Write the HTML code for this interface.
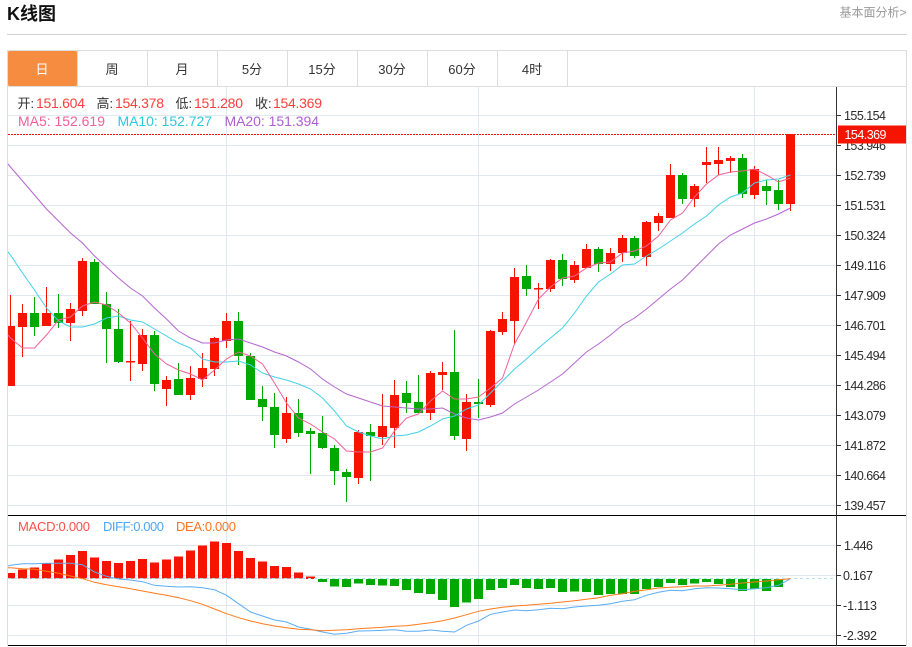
<!DOCTYPE html>
<html lang="zh">
<head>
<meta charset="utf-8">
<title>K线图</title>
<style>
html,body{margin:0;padding:0;background:#fff;}
body{width:912px;height:647px;overflow:hidden;position:relative;}
svg{position:absolute;left:0;top:0;font-family:"Liberation Sans","Noto Sans CJK SC",sans-serif;}
</style>
</head>
<body>
<svg width="912" height="647" viewBox="0 0 912 647" xmlns="http://www.w3.org/2000/svg">
<rect width="912" height="647" fill="#fff"/>
<!-- header -->
<text x="7" y="20" font-size="18" font-weight="bold" fill="#111">K线图</text>
<text x="839.5" y="16.5" font-size="12" fill="#999">基本面分析&gt;</text>
<rect x="7" y="34" width="900" height="1" fill="#d0d0d0"/>
<!-- tabs -->
<rect x="7" y="50" width="900" height="1" fill="#ddd"/>
<rect x="7" y="86" width="900" height="1" fill="#ddd"/>
<rect x="7" y="50" width="1" height="596" fill="#ddd"/>
<rect x="906" y="50" width="1" height="596" fill="#ddd"/>
<path d="M77 51h1v35h-1zM147 51h1v35h-1zM217 51h1v35h-1zM287 51h1v35h-1zM357 51h1v35h-1zM427 51h1v35h-1zM497 51h1v35h-1zM567 51h1v35h-1z" fill="#ddd"/>
<rect x="8" y="51" width="69" height="35" rx="1.5" fill="#f58c40"/>
<g font-size="13" fill="#333" text-anchor="middle">
<text x="42" y="74" fill="#fff">日</text>
<text x="112" y="74">周</text>
<text x="182" y="74">月</text>
<text x="252" y="74">5分</text>
<text x="322" y="74">15分</text>
<text x="392" y="74">30分</text>
<text x="462" y="74">60分</text>
<text x="532" y="74">4时</text>
</g>
<!-- grid -->
<path d="M8 115.5H836M8 145.5H836M8 175.5H836M8 205.5H836M8 235.5H836M8 265.5H836M8 295.5H836M8 325.5H836M8 355.5H836M8 385.5H836M8 415.5H836M8 445.5H836M8 475.5H836M8 505.5H836M8 545.5H836M8 575.5H836M8 605.5H836M8 635.5H836M226.5 87V645M478.5 87V645M754.5 87V645" stroke="#e1e8ef" stroke-width="1" fill="none"/>
<!-- red candles -->
<path fill="#f41400" d="M10 295h1v91h-1zM8 326h7v60h-7z
M22 304h1v53h-1zM18 313h9v14h-9z
M46 287h1v39h-1zM42 313h9v13h-9z
M70 303h1v38h-1zM66 309h9v14h-9z
M82 258h1v58h-1zM78 261h9v50h-9z
M130 321h1v60h-1zM126 361h9v1.5h-9z
M142 329h1v42h-1zM138 335h9v29h-9z
M166 376h1v30h-1zM162 380h9v9h-9z
M190 366h1v34h-1zM186 378h9v17h-9z
M202 353h1v34h-1zM198 368h9v11h-9z
M214 337h1v39h-1zM210 338h9v31h-9z
M226 313h1v35h-1zM222 321h9v20h-9z
M286 397h1v46h-1zM282 413h9v26h-9z
M358 430h1v54h-1zM354 432h9v46h-9z
M382 394h1v51h-1zM378 426h9v11h-9z
M394 380h1v68h-1zM390 395h9v33h-9z
M430 371h1v49h-1zM426 373h9v40h-9z
M442 362h1v28h-1zM438 372h9v3h-9z
M466 394h1v57h-1zM462 402h9v37h-9z
M490 330h1v77h-1zM486 331h9v74h-9z
M502 312h1v23h-1zM498 319h9v13h-9z
M514 268h1v76h-1zM510 277h9v44h-9z
M538 283h1v26h-1zM534 288h9v1.5h-9z
M550 259h1v33h-1zM546 260h9v29h-9z
M574 261h1v22h-1zM570 265h9v15h-9z
M586 244h1v24h-1zM582 249h9v19h-9z
M610 248h1v23h-1zM606 253h9v11h-9z
M622 235h1v27h-1zM618 238h9v15h-9z
M646 221h1v45h-1zM642 222h9v35h-9z
M658 213h1v18h-1zM654 216h9v7h-9z
M670 164h1v54h-1zM666 175h9v43h-9z
M694 184h1v23h-1zM690 186h9v13h-9z
M706 147h1v36h-1zM702 162h9v3h-9z
M718 147h1v28h-1zM714 160h9v4h-9z
M730 156h1v17h-1zM726 158h9v3h-9z
M754 166h1v33h-1zM750 169h9v26h-9z
M790 134h1v77h-1zM786 134h9v70h-9z"/>
<!-- green candles -->
<path fill="#00a800" d="M34 297h1v39h-1zM30 313h9v14h-9z
M58 294h1v34h-1zM54 313h9v10h-9z
M94 259h1v45h-1zM90 262h9v42h-9z
M106 292h1v71h-1zM102 304h9v25h-9z
M118 309h1v54h-1zM114 329h9v33h-9z
M154 331h1v60h-1zM150 335h9v49h-9z
M178 363h1v32h-1zM174 379h9v16h-9z
M238 312h1v53h-1zM234 321h9v35h-9z
M250 353h1v47h-1zM246 356h9v44h-9z
M262 386h1v35h-1zM258 399h9v8h-9z
M274 393h1v55h-1zM270 407h9v28h-9z
M298 399h1v38h-1zM294 413h9v20h-9z
M310 428h1v46h-1zM306 431h9v3h-9z
M322 416h1v33h-1zM318 433h9v15h-9z
M334 445h1v40h-1zM330 448h9v23h-9z
M346 469h1v33h-1zM342 472h9v5h-9z
M370 424h1v57h-1zM366 432h9v4h-9z
M406 381h1v32h-1zM402 393h9v10h-9z
M418 375h1v38h-1zM414 402h9v11h-9z
M454 330h1v110h-1zM450 372h9v64h-9z
M478 379h1v39h-1zM474 402h9v2h-9z
M526 265h1v31h-1zM522 276h9v13h-9z
M562 254h1v32h-1zM558 260h9v19h-9z
M598 247h1v25h-1zM594 249h9v15h-9z
M634 236h1v22h-1zM630 238h9v18h-9z
M682 173h1v31h-1zM678 175h9v24h-9z
M742 154h1v44h-1zM738 158h9v36h-9z
M766 180h1v25h-1zM762 186h9v5h-9z
M778 180h1v30h-1zM774 190h9v14h-9z"/>
<!-- MA lines -->
<polyline fill="none" stroke="#b565d0" stroke-width="1" points="8,164 10.5,167 22.5,181 34.5,195 46.5,209 58.5,221 70.5,233 82.5,243 94.5,256 106.5,267 118.5,278 130.5,288 142.5,296 154.5,308 166.5,319 178.5,331 190.5,338 202.5,343 214.5,343 226.5,340 238.5,339 250.5,343 262.5,347 274.5,352 286.5,356 298.5,362 310.5,369 322.5,379 334.5,387 346.5,394 358.5,398 370.5,402 382.5,406 394.5,407 406.5,408 418.5,409 430.5,409 442.5,408 454.5,414 466.5,418 478.5,420 490.5,417 502.5,413 514.5,404 526.5,397 538.5,390 550.5,382 562.5,374 574.5,363 586.5,352 598.5,344 610.5,335 622.5,325 634.5,318 646.5,309 658.5,299 670.5,289 682.5,280 694.5,268 706.5,256 718.5,244 730.5,235 742.5,229 754.5,223 766.5,219 778.5,214 790.5,208"/>
<polyline fill="none" stroke="#44d0e8" stroke-width="1" points="8,252 10.5,255 22.5,273 34.5,290 46.5,308 58.5,321 70.5,327 82.5,327 94.5,324 106.5,318 118.5,316 130.5,320 142.5,322 154.5,329 166.5,336 178.5,343 190.5,348 202.5,359 214.5,362 226.5,362 238.5,361 250.5,365 262.5,373 274.5,377 286.5,380 298.5,384 310.5,389 322.5,398 334.5,411 346.5,426 358.5,432 370.5,436 382.5,439 394.5,436 406.5,435 418.5,432 430.5,426 442.5,419 454.5,416 466.5,409 478.5,405 490.5,393 502.5,381 514.5,369 526.5,359 538.5,348 550.5,338 562.5,328 574.5,313 586.5,296 598.5,282 610.5,274 622.5,265 634.5,264 646.5,256 658.5,249 670.5,241 682.5,233 694.5,224 706.5,216 718.5,205 730.5,197 742.5,193 754.5,183 766.5,180 778.5,179 790.5,175"/>
<polyline fill="none" stroke="#f0609a" stroke-width="1" points="8,335 10.5,338 22.5,348 34.5,348 46.5,335 58.5,320 70.5,317 82.5,306 94.5,302 106.5,305 118.5,313 130.5,323 142.5,338 154.5,354 166.5,364 178.5,370 190.5,374 202.5,380 214.5,370 226.5,359 238.5,352 250.5,356 262.5,364 274.5,383 286.5,403 298.5,418 310.5,424 322.5,432 334.5,439 346.5,451 358.5,452 370.5,452 382.5,448 394.5,431 406.5,418 418.5,414 430.5,401 442.5,391 454.5,399 466.5,399 478.5,397 490.5,388 502.5,378 514.5,344 526.5,322 538.5,299 550.5,287 562.5,278 574.5,276 586.5,268 598.5,263 610.5,262 622.5,253 634.5,251 646.5,246 658.5,236 670.5,220 682.5,213 694.5,197 706.5,184 718.5,175 730.5,172 742.5,171 754.5,169 766.5,175 778.5,182 790.5,178"/>
<!-- MACD bars -->
<path fill="#f41400" d="M8 573h7v5.5h-7zM18 569.5h9v9h-9zM30 567.5h9v11h-9zM42 563h9v15.5h-9zM54 559.5h9v19h-9zM66 555h9v23.5h-9zM78 551h9v27.5h-9zM90 557.5h9v21h-9zM102 561h9v17.5h-9zM114 563h9v15.5h-9zM126 561h9v17.5h-9zM138 559h9v19.5h-9zM150 562.5h9v16h-9zM162 559.5h9v19h-9zM174 556.5h9v22h-9zM186 550.5h9v28h-9zM198 545.5h9v33h-9zM210 541.5h9v37h-9zM222 543h9v35.5h-9zM234 551h9v27.5h-9zM246 558h9v20.5h-9zM258 561.5h9v17h-9zM270 566h9v12.5h-9zM282 567h9v11.5h-9zM294 572.5h9v6h-9zM306 576.5h9v2.5h-9z"/>
<path fill="#00a800" d="M318 579h9v3h-9zM330 579h9v7.5h-9zM342 579h9v8h-9zM354 579h9v4.5h-9zM366 579h9v6h-9zM378 579h9v6.5h-9zM390 579h9v7h-9zM402 579h9v11h-9zM414 579h9v14h-9zM426 579h9v15h-9zM438 579h9v21h-9zM450 579h9v28h-9zM462 579h9v23.5h-9zM474 579h9v20h-9zM486 579h9v11h-9zM498 579h9v9h-9zM510 579h9v6h-9zM522 579h9v9h-9zM534 579h9v10h-9zM546 579h9v9h-9zM558 579h9v13h-9zM570 579h9v12.5h-9zM582 579h9v13h-9zM594 579h9v16h-9zM606 579h9v15h-9zM618 579h9v15h-9zM630 579h9v15h-9zM642 579h9v10h-9zM654 579h9v8h-9zM666 579h9v4h-9zM678 579h9v6h-9zM690 579h9v4.5h-9zM702 579h9v3h-9zM714 579h9v5h-9zM726 579h9v8h-9zM738 579h9v12h-9zM750 579h9v10h-9zM762 579h9v12h-9zM774 579h9v8h-9z"/>
<line x1="8" y1="578.5" x2="834" y2="578.5" stroke="#b4e2f2" stroke-width="1" stroke-dasharray="3 3"/>
<polyline fill="none" stroke="#59adf5" stroke-width="1" points="8,566 10.5,565.3 22.5,563.7 34.5,563.7 46.5,563.3 58.5,563.3 70.5,563.3 82.5,564.7 94.5,572 106.5,576.3 118.5,579 130.5,580 142.5,581.7 154.5,585.3 166.5,586.3 178.5,587 190.5,586.7 202.5,587.7 214.5,589.7 226.5,595.3 238.5,603.7 250.5,612 262.5,616 274.5,620 286.5,622 298.5,627 310.5,629.3 322.5,632 334.5,634.3 346.5,633.3 358.5,631 370.5,630.7 382.5,630.3 394.5,629.7 406.5,631.3 418.5,631.3 430.5,630 442.5,631.3 454.5,632 466.5,625.3 478.5,621 490.5,614.3 502.5,612 514.5,610 526.5,610.7 538.5,609.7 550.5,608.3 562.5,608.7 574.5,607 586.5,606 598.5,605.3 610.5,603.7 622.5,601.3 634.5,599.7 646.5,595.3 658.5,592.3 670.5,590.3 682.5,590.7 694.5,588.7 706.5,587.7 718.5,588 730.5,588.7 742.5,589.7 754.5,588.7 766.5,587.7 778.5,585.3 790.5,578.7"/>
<polyline fill="none" stroke="#ff7a1a" stroke-width="1" points="8,567.7 10.5,567.7 22.5,568.7 34.5,569.3 46.5,571.3 58.5,573.3 70.5,576 82.5,578.7 94.5,582.3 106.5,584.7 118.5,586.7 130.5,588.7 142.5,591 154.5,593.3 166.5,595.3 178.5,597.7 190.5,600.7 202.5,604.3 214.5,609 226.5,613.7 238.5,617.7 250.5,621 262.5,623.7 274.5,626 286.5,627.7 298.5,629.3 310.5,629.7 322.5,630.7 334.5,630.3 346.5,629.7 358.5,628.7 370.5,628 382.5,627.3 394.5,626.3 406.5,625.7 418.5,624.3 430.5,622.7 442.5,620.7 454.5,618 466.5,614.7 478.5,611.3 490.5,609 502.5,607.3 514.5,606 526.5,605.3 538.5,604.3 550.5,603.3 562.5,602 574.5,600.7 586.5,599.3 598.5,597.7 610.5,595.3 622.5,593.7 634.5,591.3 646.5,589.7 658.5,588 670.5,587.3 682.5,586.7 694.5,586 706.5,586 718.5,585.3 730.5,584.3 742.5,583 754.5,582 766.5,581 778.5,579.7 790.5,578.7"/>
<!-- current price line -->
<line x1="8" y1="134.5" x2="836" y2="134.5" stroke="#f41400" stroke-width="1" stroke-dasharray="2 1"/>
<!-- separators -->
<rect x="8" y="515" width="898" height="1" fill="#000"/>
<rect x="8" y="645" width="898" height="1" fill="#000"/>
<!-- axis -->
<rect x="836" y="87" width="1" height="559" fill="#333"/>
<path d="M837 115.5h4M837 145.5h4M837 175.5h4M837 205.5h4M837 235.5h4M837 265.5h4M837 295.5h4M837 325.5h4M837 355.5h4M837 385.5h4M837 415.5h4M837 445.5h4M837 475.5h4M837 505.5h4M837 545.5h4M837 575.5h4M837 605.5h4M837 635.5h4" stroke="#333" stroke-width="1"/>
<g font-size="12.5" fill="#2a2a2a">
<text x="844" y="120" textLength="42">155.154</text>
<text x="844" y="150" textLength="42">153.946</text>
<text x="844" y="180" textLength="42">152.739</text>
<text x="844" y="210" textLength="42">151.531</text>
<text x="844" y="240" textLength="42">150.324</text>
<text x="844" y="270" textLength="42">149.116</text>
<text x="844" y="300" textLength="42">147.909</text>
<text x="844" y="330" textLength="42">146.701</text>
<text x="844" y="360" textLength="42">145.494</text>
<text x="844" y="390" textLength="42">144.286</text>
<text x="844" y="420" textLength="42">143.079</text>
<text x="844" y="450" textLength="42">141.872</text>
<text x="844" y="480" textLength="42">140.664</text>
<text x="844" y="510" textLength="42">139.457</text>
<text x="844" y="550" textLength="29">1.446</text>
<text x="843" y="580" textLength="30">0.167</text>
<text x="843" y="610" textLength="34">-1.113</text>
<text x="843" y="640" textLength="34">-2.392</text>
</g>
<rect x="838" y="125.5" width="68" height="18" fill="#f41400"/>
<text x="844.5" y="139" font-size="12.5" fill="#fff" textLength="42">154.369</text>
<!-- legends -->
<g font-size="14">
<text x="17.5" y="108" fill="#333" font-size="13">开:</text>
<text x="36" y="108" fill="#f9403a" textLength="49">151.604</text>
<text x="96.5" y="108" fill="#333" font-size="13">高:</text>
<text x="115" y="108" fill="#f9403a" textLength="49">154.378</text>
<text x="175.5" y="108" fill="#333" font-size="13">低:</text>
<text x="194" y="108" fill="#f9403a" textLength="49">151.280</text>
<text x="255" y="108" fill="#333" font-size="13">收:</text>
<text x="273" y="108" fill="#f9403a" textLength="49">154.369</text>
<text x="18" y="126" fill="#f0609a" textLength="87">MA5: 152.619</text>
<text x="117.5" y="126" fill="#2ec7e0" textLength="94.5">MA10: 152.727</text>
<text x="224.5" y="126" fill="#ad5fd0" textLength="94.5">MA20: 151.394</text>
<text x="18" y="531" fill="#f9504a" font-size="13" textLength="72">MACD:0.000</text>
<text x="103" y="531" fill="#4da6f5" font-size="13" textLength="61">DIFF:0.000</text>
<text x="176" y="531" fill="#ff7420" font-size="13" textLength="60">DEA:0.000</text>
</g>
</svg>
</body>
</html>
